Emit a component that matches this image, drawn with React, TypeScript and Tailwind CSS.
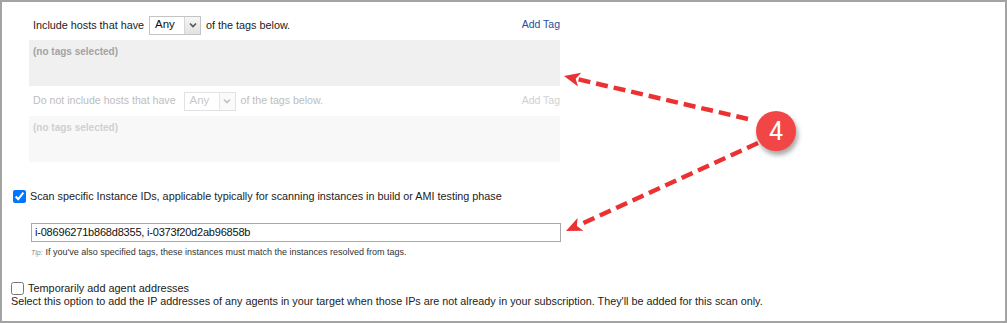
import React from "react";

function FakeSelect({ disabled }: { disabled?: boolean }) {
  return (
    <div
      className={
        disabled
          ? "flex h-[19px] w-[52px] border border-[#e2e2e2] bg-white"
          : "flex h-[19px] w-[52px] border border-[#c4c4c4] bg-white"
      }
    >
      <div
        className={
          disabled
            ? "flex flex-1 items-center pl-[5px] text-[11.5px] text-[#c8c8c8]"
            : "flex flex-1 items-center pl-[5px] text-[11.5px] text-[#111]"
        }
      >
        Any
      </div>
      <div
        className={
          disabled
            ? "flex w-[16px] items-center justify-center border-l border-[#e6e6e6] bg-[#fafafa]"
            : "flex w-[16px] items-center justify-center border-l border-[#d6d6d6] bg-gradient-to-b from-[#f6f6f6] to-[#e2e2e2]"
        }
      >
        <svg width="8" height="6" viewBox="0 0 8 6">
          <path
            d="M1 1.5 L4 4.5 L7 1.5"
            fill="none"
            stroke={disabled ? "#c0c0c0" : "#555"}
            strokeWidth="1.6"
          />
        </svg>
      </div>
    </div>
  );
}

export default function App() {
  return (
    <div className="relative h-[323px] w-[1007px] overflow-hidden border-2 border-[#a3a3a3] bg-white font-['Liberation_Sans',Arial,sans-serif] text-[#222]">
      {/* Tag section */}
      <div className="ml-[27px] w-[531px] pt-[8px]">
        <div className="flex h-[30px] items-center justify-between pl-[4px] text-[10.8px]">
          <div className="flex items-center">
            <span className="text-[#222]">Include hosts that have</span>
            <div className="ml-[5px] mr-[5px]">
              <FakeSelect />
            </div>
            <span className="text-[#222]">of the tags below.</span>
          </div>
          <span className="text-[10.5px] text-[#1d4f9e]">Add Tag</span>
        </div>
        <div className="h-[46px] bg-[#f0f0f0] px-[4px] pt-[6px] text-[10px] font-bold leading-[12px] text-[#a3a3a3]">
          (no tags selected)
        </div>
        <div className="flex h-[30px] items-center justify-between pl-[4px] text-[10.6px]">
          <div className="flex items-center">
            <span className="text-[#bdbdbd]">Do not include hosts that have</span>
            <div className="ml-[8px] mr-[5px]">
              <FakeSelect disabled />
            </div>
            <span className="text-[#bdbdbd]">of the tags below.</span>
          </div>
          <span className="text-[10.5px] text-[#d0d0d0]">Add Tag</span>
        </div>
        <div className="h-[46px] bg-[#f8f8f8] px-[4px] pt-[6px] text-[10px] font-bold leading-[12px] text-[#d0d0d0]">
          (no tags selected)
        </div>
      </div>

      {/* Instance IDs */}
      <div className="mt-[24px] flex h-[20px] items-center gap-[4px] pl-[11px]">
        <input type="checkbox" defaultChecked readOnly className="h-[13px] w-[13px]" />
        <span className="text-[10.8px] text-[#222]">
          Scan specific Instance IDs, applicable typically for scanning instances in build or AMI testing phase
        </span>
      </div>
      <div className="ml-[29px] mt-[17px] flex h-[19px] w-[530px] items-center border border-[#a9a9a9] pl-[3px] text-[11px] tracking-[-0.2px] text-[#111]">
        i-08696271b868d8355, i-0373f20d2ab96858b
      </div>
      <div className="ml-[29px] mt-[5px] flex h-[12px] items-center text-[9px] text-[#333]">
        <span className="mr-[3px] text-[7px] italic text-[#8a8a8a]">Tip:</span>
        <span>If you've also specified tags, these instances must match the instances resolved from tags.</span>
      </div>

      {/* Agent addresses */}
      <div className="mt-[23px] flex h-[13px] items-center gap-[4px] pl-[9px]">
        <input type="checkbox" readOnly className="h-[13px] w-[13px]" />
        <span className="text-[10.9px] text-[#222]">Temporarily add agent addresses</span>
      </div>
      <div className="flex h-[12px] items-center pl-[9px] text-[10.8px] text-[#222]">
        Select this option to add the IP addresses of any agents in your target when those IPs are not already in your subscription. They'll be added for this scan only.
      </div>

      {/* Annotation overlay */}
      <svg
        className="pointer-events-none absolute left-[-2px] top-[-2px]"
        width="1007"
        height="323"
        viewBox="0 0 1007 323"
      >
        <line
          x1="748"
          y1="119"
          x2="577"
          y2="79"
          stroke="#eb3131"
          strokeWidth="4.5"
          strokeDasharray="12 6"
        />
        <polygon points="564,76 581.2,72.8 575.7,78.7 578,86.4" fill="#eb3131" />
        <line
          x1="758"
          y1="143"
          x2="578"
          y2="225.5"
          stroke="#eb3131"
          strokeWidth="4.5"
          strokeDasharray="12 6"
        />
        <polygon points="566,231 577.6,217.9 576.9,226 583.4,230.7" fill="#eb3131" />
      </svg>
      <div className="absolute left-[754px] top-[109px] flex h-[40px] w-[40px] items-center justify-center rounded-full bg-[#f24545] text-[25px] leading-none text-white shadow-[2px_4px_5px_rgba(0,0,0,0.35)] font-['Roboto',Arial,sans-serif]">
        4
      </div>
    </div>
  );
}
